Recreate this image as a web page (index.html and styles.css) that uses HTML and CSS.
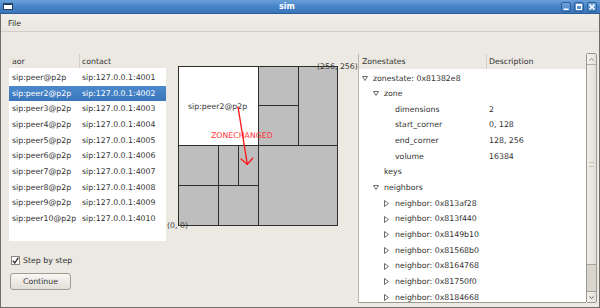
FILE: index.html
```html
<!DOCTYPE html>
<html>
<head>
<meta charset="utf-8">
<link rel="stylesheet" href="styles.css">
</head>
<body>
<div class="titlebar">
  <span class="ticon"></span>
  <span class="title">sim</span>
  <span class="tbtns">
    <span class="tbtn"><svg width="8" height="8"><rect x="1.5" y="5.5" width="5" height="1.5" fill="#fff"/></svg></span>
    <span class="tbtn"><svg width="8" height="8"><rect x="1.5" y="1.5" width="5" height="5" fill="none" stroke="#fff"/><rect x="1" y="1" width="6" height="2" fill="#fff"/></svg></span>
    <span class="tbtn"><svg width="8" height="8"><path d="M1.5 1.5 L6.5 6.5 M6.5 1.5 L1.5 6.5" stroke="#fff" stroke-width="1.6"/></svg></span>
  </span>
</div>
<div class="frame">
  <div class="menubar"><span class="menu">File</span></div>
  <div class="content">
    <div class="leftpane">
      <div class="lhead"><span class="c1">aor</span><span class="c2">contact</span></div>
      <div class="lbody">
        <div class="lrow"><span class="a">sip:peer@p2p</span><span>sip:127.0.0.1:4001</span></div>
        <div class="lrow sel"><span class="a">sip:peer2@p2p</span><span>sip:127.0.0.1:4002</span></div>
        <div class="lrow"><span class="a">sip:peer3@p2p</span><span>sip:127.0.0.1:4003</span></div>
        <div class="lrow"><span class="a">sip:peer4@p2p</span><span>sip:127.0.0.1:4004</span></div>
        <div class="lrow"><span class="a">sip:peer5@p2p</span><span>sip:127.0.0.1:4005</span></div>
        <div class="lrow"><span class="a">sip:peer6@p2p</span><span>sip:127.0.0.1:4006</span></div>
        <div class="lrow"><span class="a">sip:peer7@p2p</span><span>sip:127.0.0.1:4007</span></div>
        <div class="lrow"><span class="a">sip:peer8@p2p</span><span>sip:127.0.0.1:4008</span></div>
        <div class="lrow"><span class="a">sip:peer9@p2p</span><span>sip:127.0.0.1:4009</span></div>
        <div class="lrow"><span class="a">sip:peer10@p2p</span><span>sip:127.0.0.1:4010</span></div>
      </div>
      <label class="check"><span class="box"><svg width="7" height="7"><path d="M0.8 3.6 L2.8 6 L6.3 0.6" stroke="#2a2a2a" stroke-width="1.3" fill="none"/></svg></span>Step by step</label>
      <button class="btn">Continue</button>
    </div>
    <svg class="zones" width="192" height="190" viewBox="0 0 192 190">
      <rect x="12.5" y="12.5" width="159" height="159" fill="#bebebe"/>
      <rect x="12.5" y="12.5" width="80" height="79" fill="#ffffff"/>
      <g stroke="#2e2e2e" stroke-width="1" fill="none">
        <rect x="12.5" y="12.5" width="159" height="159"/>
        <line x1="92.5" y1="12.5" x2="92.5" y2="171.5"/>
        <line x1="132.5" y1="12.5" x2="132.5" y2="91.5"/>
        <line x1="92.5" y1="51.5" x2="132.5" y2="51.5"/>
        <line x1="12.5" y1="91.5" x2="171.5" y2="91.5"/>
        <line x1="52.5" y1="91.5" x2="52.5" y2="171.5"/>
        <line x1="72.5" y1="91.5" x2="72.5" y2="131.5"/>
        <line x1="12.5" y1="131.5" x2="92.5" y2="131.5"/>
      </g>
      <text class="lbl" x="151" y="15">(256, 256)</text>
      <text class="lbl" x="1" y="174">(0, 0)</text>
      <text class="lbl" x="22" y="55">sip:peer2@p2p</text>
      <text class="red" x="45" y="84">ZONECHANGED</text>
      <g stroke="#ff1a1a" stroke-width="1.4" fill="none" stroke-linecap="round">
        <line x1="72" y1="53" x2="81.3" y2="110"/>
        <line x1="75" y1="105" x2="81.3" y2="110.3"/>
        <line x1="86.7" y1="104.3" x2="81.3" y2="110.3"/>
      </g>
    </svg>
    <div class="rightpane">
      <div class="tree">
        <div class="thead"><span class="tc1">Zonestates</span><span class="tc2">Description</span></div>
        <div class="tbody">
          <div class="trow"><span class="tn d0"><span class="exp"><svg width="6" height="5"><polygon points="0.5,0.5 5.5,0.5 3,4.5" fill="none" stroke="#6a6a6a"/></svg></span>zonestate: 0x81382e8</span><span class="td"></span></div>
          <div class="trow"><span class="tn d1"><span class="exp"><svg width="6" height="5"><polygon points="0.5,0.5 5.5,0.5 3,4.5" fill="none" stroke="#6a6a6a"/></svg></span>zone</span><span class="td"></span></div>
          <div class="trow"><span class="tn d2"><span class="exp"></span>dimensions</span><span class="td">2</span></div>
          <div class="trow"><span class="tn d2"><span class="exp"></span>start_corner</span><span class="td">0, 128</span></div>
          <div class="trow"><span class="tn d2"><span class="exp"></span>end_corner</span><span class="td">128, 256</span></div>
          <div class="trow"><span class="tn d2"><span class="exp"></span>volume</span><span class="td">16384</span></div>
          <div class="trow"><span class="tn d1"><span class="exp"></span>keys</span><span class="td"></span></div>
          <div class="trow"><span class="tn d1"><span class="exp"><svg width="6" height="5"><polygon points="0.5,0.5 5.5,0.5 3,4.5" fill="none" stroke="#6a6a6a"/></svg></span>neighbors</span><span class="td"></span></div>
          <div class="trow"><span class="tn d2"><span class="exp"><svg width="5" height="7"><polygon points="0.5,0.5 4.5,3.5 0.5,6.5" fill="none" stroke="#6a6a6a"/></svg></span>neighbor: 0x813af28</span><span class="td"></span></div>
          <div class="trow"><span class="tn d2"><span class="exp"><svg width="5" height="7"><polygon points="0.5,0.5 4.5,3.5 0.5,6.5" fill="none" stroke="#6a6a6a"/></svg></span>neighbor: 0x813f440</span><span class="td"></span></div>
          <div class="trow"><span class="tn d2"><span class="exp"><svg width="5" height="7"><polygon points="0.5,0.5 4.5,3.5 0.5,6.5" fill="none" stroke="#6a6a6a"/></svg></span>neighbor: 0x8149b10</span><span class="td"></span></div>
          <div class="trow"><span class="tn d2"><span class="exp"><svg width="5" height="7"><polygon points="0.5,0.5 4.5,3.5 0.5,6.5" fill="none" stroke="#6a6a6a"/></svg></span>neighbor: 0x81568b0</span><span class="td"></span></div>
          <div class="trow"><span class="tn d2"><span class="exp"><svg width="5" height="7"><polygon points="0.5,0.5 4.5,3.5 0.5,6.5" fill="none" stroke="#6a6a6a"/></svg></span>neighbor: 0x8164768</span><span class="td"></span></div>
          <div class="trow"><span class="tn d2"><span class="exp"><svg width="5" height="7"><polygon points="0.5,0.5 4.5,3.5 0.5,6.5" fill="none" stroke="#6a6a6a"/></svg></span>neighbor: 0x81750f0</span><span class="td"></span></div>
          <div class="trow"><span class="tn d2"><span class="exp"><svg width="5" height="7"><polygon points="0.5,0.5 4.5,3.5 0.5,6.5" fill="none" stroke="#6a6a6a"/></svg></span>neighbor: 0x8184668</span><span class="td"></span></div>
        </div>
      </div>
      <div class="sb">
        <div class="sbtn up"><svg width="5" height="3"><path d="M0.5 2.5 L2.5 0.5 L4.5 2.5" stroke="#8a857c" fill="none"/></svg></div>
        <div class="thumb"><span class="grip"></span></div>
        <div class="sbtn down"><svg width="5" height="3"><path d="M0.5 0.5 L2.5 2.5 L4.5 0.5" stroke="#5a564f" fill="none"/></svg></div>
      </div>
    </div>
  </div>
</div>
</body>
</html>
```

FILE: styles.css
```css
html, body {
  margin: 0;
  padding: 0;
}
body {
  width: 600px;
  height: 308px;
  overflow: hidden;
  background: #ece9e3;
  font-family: "DejaVu Sans", sans-serif;
  font-size: 7.8px;
  color: #333;
}
.titlebar {
  height: 14px;
  box-sizing: border-box;
  background: linear-gradient(#6aa0d9, #4884c7 50%, #3a75ba);
  border-bottom: 1px solid #2d5b93;
  display: flex;
  align-items: center;
}
.ticon {
  width: 10px;
  height: 7px;
  margin-left: 3px;
  box-sizing: border-box;
  border: 1px solid #22426a;
  border-top-width: 2px;
  background: #fff;
}
.title {
  flex: 1;
  text-align: center;
  color: #fff;
  font-weight: bold;
  font-size: 8px;
  line-height: 13px;
}
.tbtns {
  display: flex;
  gap: 3px;
  margin-right: 3px;
}
.tbtn {
  width: 10px;
  height: 10px;
  box-sizing: border-box;
  border: 1px solid #2f5f9b;
  border-radius: 2px;
  background: linear-gradient(#6ea2da, #4a86c8);
  display: flex;
  align-items: center;
  justify-content: center;
}
.frame {
  height: 294px;
  box-sizing: border-box;
  border: 1px solid #6e6c68;
  border-top: none;
  display: flex;
  flex-direction: column;
}
.menubar {
  height: 15px;
  padding-top: 2px;
  line-height: 15px;
  padding-left: 7px;
  border-bottom: 1px solid #d3cec5;
  background: linear-gradient(#f0eee9, #e9e6e0);
  color: #2e2e2e;
}
.content {
  display: flex;
  padding-top: 22px;
  flex: 1;
}
.leftpane {
  margin-left: 8px;
  width: 157px;
  display: flex;
  flex-direction: column;
  flex-shrink: 0;
}
.lhead {
  height: 14px;
  display: flex;
  line-height: 15px;
}
.lhead .c1 {
  width: 71px;
  box-sizing: border-box;
  padding-left: 3px;
  border-right: 1px solid #d3cec6;
}
.lhead .c2 {
  padding-left: 2px;
}
.lbody {
  background: #fff;
  height: 173px;
  box-sizing: border-box;
  padding-top: 2px;
}
.lrow {
  height: 15.67px;
  line-height: 15.67px;
  display: flex;
  white-space: nowrap;
}
.lrow .a {
  width: 73px;
  box-sizing: border-box;
  padding-left: 3px;
}
.lrow.sel {
  background: linear-gradient(#4b89cc, #3a76bb);
  color: #fff;
}
.check {
  display: flex;
  align-items: center;
  height: 15px;
  margin-top: 12px;
  padding-left: 2px;
}
.box {
  width: 9px;
  height: 9px;
  box-sizing: border-box;
  border: 1px solid #8b877f;
  background: #fff;
  margin-right: 3px;
  display: flex;
  align-items: center;
  justify-content: center;
}
.btn {
  margin-top: 5px;
  margin-left: 1px;
  width: 61px;
  height: 17px;
  padding: 0;
  border: 1px solid #a29d92;
  border-radius: 3px;
  background: linear-gradient(#f8f7f4, #e3dfd8);
  font-family: "DejaVu Sans", sans-serif;
  font-size: 7.8px;
  color: #333;
}
.zones {
  flex-shrink: 0;
  display: block;
}
.lbl {
  font-family: "DejaVu Sans", sans-serif;
  font-size: 7.8px;
  fill: #3a3a3a;
}
.red {
  font-family: "DejaVu Sans", sans-serif;
  font-size: 7.8px;
  fill: #ff3333;
}
.rightpane {
  width: 239px;
  display: flex;
  flex-shrink: 0;
}
.tree {
  width: 228px;
  height: 249px;
  box-sizing: border-box;
  border-left: 1px solid #bdb8ae;
  border-bottom: 1px solid #9f9a90;
}
.thead {
  height: 15px;
  line-height: 15px;
  display: flex;
}
.tc1 {
  width: 128px;
  box-sizing: border-box;
  padding-left: 3px;
  border-right: 1px solid #d3cec6;
}
.tc2 {
  padding-left: 2px;
}
.tbody {
  background: #fff;
  height: 233px;
  box-sizing: border-box;
  padding-top: 1.5px;
  overflow: hidden;
}
.trow {
  height: 15.67px;
  line-height: 15.67px;
  display: flex;
  white-space: nowrap;
}
.tn {
  width: 130px;
  box-sizing: border-box;
  display: flex;
  align-items: center;
}
.d0 { padding-left: 3px; }
.d1 { padding-left: 14px; }
.d2 { padding-left: 25px; }
.exp {
  width: 11px;
  flex-shrink: 0;
  display: flex;
  align-items: center;
}
.sb {
  width: 11px;
  height: 250px;
  margin-top: -1px;
  box-sizing: border-box;
  border: 1px solid #9d988e;
  border-radius: 2px;
  background: #d9d5cd;
  display: flex;
  flex-direction: column;
}
.sbtn {
  height: 10px;
  flex-shrink: 0;
  background: linear-gradient(90deg, #f4f2ee, #e3dfd8);
  display: flex;
  align-items: center;
  justify-content: center;
}
.sbtn.up {
  border-bottom: 1px solid #b3ada3;
}
.sbtn.down {
  margin-top: auto;
  border-top: 1px solid #a39e94;
}
.thumb {
  height: 200px;
  box-sizing: border-box;
  background: linear-gradient(90deg, #f1efeb, #e2ded7);
  border-bottom: 1px solid #a8a298;
  display: flex;
  align-items: center;
  justify-content: center;
}
.grip {
  width: 5px;
  height: 3px;
  border-top: 1px solid #c5c0b7;
  border-bottom: 1px solid #c5c0b7;
}
```
